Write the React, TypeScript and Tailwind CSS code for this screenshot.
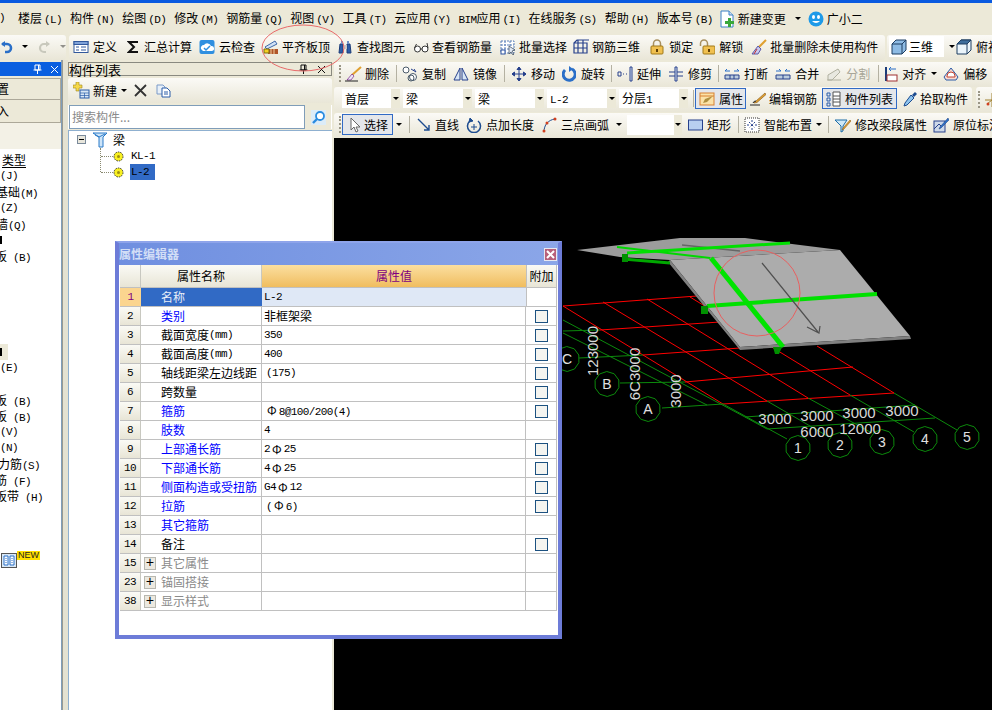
import type { ReactNode } from "react";

const mono = "font-['Liberation_Mono','Noto_Sans_CJK_SC',monospace] text-[11px] tracking-[-0.6px]";
const band = "bg-linear-to-b from-[#fbfaf6] to-[#e9e6d7]";

function Ico({ children, w = 16 }: { children: ReactNode; w?: number }) {
  return (
    <svg width={w} height={16} viewBox={`0 0 ${w} 16`} className="shrink-0">
      {children}
    </svg>
  );
}

function Arrow({ className = "" }: { className?: string }) {
  return <span className={`h-0 w-0 shrink-0 border-x-[3px] border-t-[3px] border-x-transparent border-t-black ${className}`} />;
}

function Sep({ className = "" }: { className?: string }) {
  return <span className={`h-[17px] w-px shrink-0 bg-[#b4b1a2] ${className}`} />;
}

function Grip({ className = "" }: { className?: string }) {
  return <span className={`h-[17px] w-[2px] shrink-0 border-l-2 border-dotted border-[#9a9686] ${className}`} />;
}

function Tool({ icon, label, className = "", gap = "gap-[4px]", muted }: { icon: ReactNode; label: string; className?: string; gap?: string; muted?: boolean }) {
  return (
    <span className={`flex shrink-0 items-center whitespace-nowrap ${gap} ${muted ? "text-[#a8a698]" : ""} ${className}`}>
      {icon}
      {label}
    </span>
  );
}

function Menu({ label, hot, className = "" }: { label: string; hot: string; className?: string }) {
  return (
    <span className={`shrink-0 whitespace-nowrap ${className}`}>
      {label}
      <span className={`${mono} ml-[2px]`}>({hot})</span>
    </span>
  );
}

function Drop({ label, className = "" }: { label: ReactNode; className?: string }) {
  return (
    <span className={`flex h-[19px] shrink-0 items-center bg-white pl-[3px] ${className}`}>
      <span className="flex-1 truncate">{label}</span>
      <span className="flex h-full w-[9px] items-center justify-center bg-[#ece9d8]">
        <Arrow />
      </span>
    </span>
  );
}

const icons = {
  define: (
    <Ico>
      <rect x="1" y="2.5" width="14" height="11" fill="#fff" stroke="#31589c" />
      <rect x="1" y="2.5" width="14" height="3" fill="#7fa2d8" stroke="#31589c" />
      <path d="M3 8h3M3 11h3M8 8h5M8 11h5" stroke="#31589c" />
    </Ico>
  ),
  sigma: (
    <Ico w={13}>
      <path d="M11 3H2l5 5-5 5h9" fill="none" stroke="#111" strokeWidth="2" />
    </Ico>
  ),
  cloud: (
    <Ico>
      <rect x="0.5" y="1" width="15" height="14" rx="2" fill="#2f8fe0" />
      <path d="M2 10a3 3 0 0 1 3-4 4 4 0 0 1 7 1 2.5 2.5 0 0 1 1 5H4z" fill="#fff" />
      <path d="M5 9l2 2 4-4" fill="none" stroke="#2f8fe0" strokeWidth="1.5" />
    </Ico>
  ),
  align: (
    <Ico>
      <path d="M2 8l10-6 2 3-10 5z" fill="#cfe0f5" stroke="#3e68a8" />
      <rect x="5" y="10" width="10" height="5" fill="#b0552a" />
      <path d="M8 10v5M11 10v5" stroke="#f0d0a0" />
      <path d="M1 10h5v4H1z" fill="#f5d020" stroke="#7a6a10" />
    </Ico>
  ),
  binoculars: (
    <Ico>
      <path d="M2 14l1-9h3v9zM10 14V5h3l1 9z" fill="#2d5ca8" stroke="#1d3c78" />
      <rect x="6" y="6" width="4" height="4" fill="#c8c8c8" />
      <rect x="4" y="2" width="2" height="3" fill="#6d8fc8" />
      <rect x="10" y="2" width="2" height="3" fill="#6d8fc8" />
    </Ico>
  ),
  glasses: (
    <Ico>
      <circle cx="4.5" cy="10" r="3" fill="#fff" stroke="#333" />
      <circle cx="12" cy="10" r="3" fill="#fff" stroke="#333" />
      <path d="M7.5 10h1.5M1.5 9l2-4M15 9l-1-5" stroke="#333" fill="none" />
    </Ico>
  ),
  batch: (
    <Ico>
      <path d="M1 2h13v12H1zM1 6h13M1 10h13M5 2v12M10 2v12" fill="#fff" stroke="#5a7fb8" strokeDasharray="2 1" />
      <rect x="1" y="11" width="4" height="4" fill="#fff" stroke="#2a50a0" />
      <path d="M9 7l6 4-3 1 2 3-1 1-2-3-2 2z" fill="#e0e8f5" stroke="#345" strokeWidth="0.7" />
    </Ico>
  ),
  rebar3d: (
    <Ico>
      <path d="M1 4l3-3h12M1 4h13v10H1zM5 1v13M10 1v13M1 9h13" fill="none" stroke="#27418c" strokeWidth="1.2" />
    </Ico>
  ),
  lock: (
    <Ico>
      <path d="M4.5 7V4.5a3.5 3.5 0 0 1 7 0V7" fill="none" stroke="#a89060" strokeWidth="1.5" />
      <rect x="2" y="7" width="12" height="8" rx="1" fill="#f0c050" stroke="#a07818" />
      <rect x="7" y="10" width="2" height="3" fill="#604008" />
    </Ico>
  ),
  unlock: (
    <Ico>
      <path d="M1.5 7V4.5a3.5 3.5 0 0 1 7 0V7" fill="none" stroke="#a89060" strokeWidth="1.5" />
      <rect x="4" y="7" width="12" height="8" rx="1" fill="#f0c050" stroke="#a07818" />
      <rect x="9" y="10" width="2" height="3" fill="#604008" />
    </Ico>
  ),
  broom: (
    <Ico>
      <path d="M15 1L7 9" stroke="#e0a030" strokeWidth="2" />
      <path d="M7 7l3 3-3 5H1z" fill="#c8c8f0" stroke="#5a5aa8" />
      <path d="M3 15l3-5" stroke="#c03030" />
    </Ico>
  ),
  cube: (
    <Ico>
      <path d="M1 5l4-4h10v10l-4 4H1z" fill="#8ebbe4" stroke="#1d3c60" />
      <path d="M1 5h10v10M11 5l4-4" fill="none" stroke="#1d3c60" />
    </Ico>
  ),
  topView: (
    <Ico>
      <path d="M1 5l4-4h10v10l-4 4H1z" fill="#eaf4fb" stroke="#1d3c60" />
      <path d="M1 5l4-4h10l-4 4z" fill="#3d6d9c" stroke="#1d3c60" />
      <path d="M11 5v10M11 5l4-4" fill="none" stroke="#1d3c60" />
    </Ico>
  ),
  erase: (
    <Ico w={17}>
      <path d="M16 1L7 9" stroke="#e0a030" strokeWidth="2" />
      <path d="M7 8l2 2-3 4H2z" fill="#e8e8f8" stroke="#607" strokeWidth="0.6" />
      <path d="M0 15h13" stroke="#222" />
    </Ico>
  ),
  copy: (
    <Ico>
      <circle cx="4" cy="4" r="3" fill="#fff" stroke="#4a5a6a" />
      <circle cx="11" cy="11" r="3.5" fill="#fff" stroke="#4a5a6a" />
      <circle cx="9" cy="12" r="3" fill="none" stroke="#4a5a6a" />
      <path d="M9 3l5 3-2-3" fill="none" stroke="#27418c" />
    </Ico>
  ),
  mirror: (
    <Ico>
      <path d="M7 2L1 14h6zM9 2l6 12H9z" fill="#d8e6f5" stroke="#27418c" />
    </Ico>
  ),
  move: (
    <Ico>
      <path d="M8 1v14M1 8h14M8 1L6 3.5h4zM8 15l-2-2.5h4zM1 8l2.5-2v4zM15 8l-2.5-2v4z" fill="#27418c" stroke="#27418c" />
    </Ico>
  ),
  rotate: (
    <Ico w={14}>
      <path d="M3 4a6 6 0 1 0 7-1" fill="none" stroke="#2a6fc8" strokeWidth="3" />
      <path d="M7 0l4 3-4 3z" fill="#2a6fc8" />
    </Ico>
  ),
  extend: (
    <Ico>
      <path d="M1 6h3v4H1zM6 8h1M9 8h1" fill="none" stroke="#27418c" />
      <path d="M13 1h2v14h-2z" fill="#dfe8f5" stroke="#27418c" />
    </Ico>
  ),
  trim: (
    <Ico w={15}>
      <path d="M0 6h14M0 10h14" stroke="#27418c" />
      <path d="M6 1h2v14H6z" fill="#dfe8f5" stroke="#27418c" />
    </Ico>
  ),
  split: (
    <Ico>
      <path d="M1 5h5M10 5h5M1 5l2-2M15 5l-2-2" stroke="#2a6fc8" fill="none" />
      <path d="M1 9h14v4H1zM6 9v4M10 9v4" fill="#bcd" stroke="#27418c" />
    </Ico>
  ),
  merge: (
    <Ico>
      <path d="M1 5h5M10 5h5M6 5L4 3M10 5l2-2" stroke="#2a6fc8" fill="none" />
      <path d="M1 9h14v4H1zM8 9v4" fill="#bcd" stroke="#27418c" />
    </Ico>
  ),
  cut: (
    <Ico>
      <path d="M2 14V9l10-6 2 3-8 8z" fill="#e8e8e0" stroke="#b0b0a0" />
      <path d="M1 14h14" stroke="#b0b0a0" />
    </Ico>
  ),
  alignLeft: (
    <Ico w={13}>
      <path d="M1 1v14" stroke="#1d3c78" strokeWidth="2" />
      <path d="M4 3h7M4 3l2-2M4 3l2 2" stroke="#2a6fc8" fill="none" />
      <rect x="2" y="9" width="10" height="6" fill="#fff" stroke="#a03030" />
    </Ico>
  ),
  offset: (
    <Ico>
      <path d="M1 11L8 2l7 9-2 3H3z" fill="#f8d8d0" stroke="#2a5ca8" />
      <path d="M4 10a4 4 0 0 1 8 0v1H4z" fill="#fff" stroke="#c04030" />
    </Ico>
  ),
  attr: (
    <Ico>
      <rect x="1" y="2" width="14" height="12" fill="#fbe2a8" stroke="#d88030" />
      <path d="M1 5h14" stroke="#d88030" />
      <path d="M4 12l2-4 8-3-6 6z" fill="#b09040" />
    </Ico>
  ),
  pencil: (
    <Ico>
      <path d="M15 2L6 10l-2 2 3-.5 9-8z" fill="#e0a030" stroke="#805010" strokeWidth="0.6" />
      <path d="M0 14h10M3 12a3 3 0 0 1 3-2" stroke="#222" fill="none" />
    </Ico>
  ),
  list: (
    <Ico w={15}>
      <path d="M1 2h3v3H1zM1 7h3v3H1zM1 12h3v3H1z" fill="none" stroke="#2a5ca8" />
      <path d="M7 1h7v14H7zM7 5h7M7 8h7M7 11h7" fill="#fff" stroke="#555" />
    </Ico>
  ),
  dropper: (
    <Ico>
      <path d="M13 1l2 2-3 3-2-2z" fill="#1d4c90" />
      <path d="M9 4l3 3-7 7-3 1 1-3z" fill="#8ec4ee" stroke="#1d4c90" />
    </Ico>
  ),
  cursor: (
    <Ico w={12}>
      <path d="M3 1v12l3-3 2 5 2-1-2-4h4z" fill="#fff" stroke="#666" />
    </Ico>
  ),
  line: (
    <Ico w={14}>
      <path d="M1 2l11 11M12 8v5H7" fill="none" stroke="#1d4c90" strokeWidth="1.4" />
    </Ico>
  ),
  pointLen: (
    <Ico>
      <path d="M4 4a6.5 6.5 0 1 0 8 0" fill="none" stroke="#1d4c90" strokeWidth="1.5" />
      <path d="M4 1l3 3-4 1zM5 10h6M8 7v6" fill="#1d4c90" stroke="#1d4c90" />
    </Ico>
  ),
  arc: (
    <Ico w={15}>
      <path d="M2 15C2 8 6 3 13 2" fill="none" stroke="#1d4c90" />
      <circle cx="2" cy="14" r="1.5" fill="#d04020" />
      <circle cx="5" cy="6" r="1.5" fill="#d04020" />
      <circle cx="13" cy="2" r="1.5" fill="#d04020" />
    </Ico>
  ),
  rect: (
    <Ico w={15}>
      <rect x="0.5" y="3" width="14" height="10" fill="#b8cff0" stroke="#27418c" />
    </Ico>
  ),
  smart: (
    <Ico>
      <rect x="1" y="1" width="14" height="14" fill="#fff" stroke="#333" strokeDasharray="1 1" />
      <path d="M8 3v10M3 8h10M5 5l6 6M11 5l-6 6" stroke="#27418c" strokeDasharray="2 2" />
    </Ico>
  ),
  filter: (
    <Ico w={17}>
      <path d="M1 3h12L9 9v5l-2 1V9z" fill="#cfe8f5" stroke="#1d6ca8" />
      <path d="M16 3L9 11l-1 2 2-1 7-8z" fill="#e0a030" stroke="#805010" strokeWidth="0.5" />
    </Ico>
  ),
  inPlace: (
    <Ico>
      <rect x="1" y="4" width="11" height="11" fill="#cdd8e8" stroke="#27418c" />
      <path d="M1 12l5-5 3 3" fill="none" stroke="#27418c" />
      <path d="M15 1L7 10l-1 2 2-1 8-8z" fill="#2a6fc8" stroke="#1d3c78" strokeWidth="0.5" />
    </Ico>
  ),
};

function Pin({ light }: { light?: boolean }) {
  const c = light ? "#fff" : "#111";
  return (
    <svg width="9" height="10" viewBox="0 0 9 10">
      <path d="M2 1h5v5H2zM0.5 6h8M4.5 6v4M5.5 1v5" fill="none" stroke={c} />
    </svg>
  );
}

function Cross({ light }: { light?: boolean }) {
  return (
    <svg width="9" height="9" viewBox="0 0 9 9">
      <path d="M1 1l7 7M8 1L1 8" stroke={light ? "#fff" : "#111"} />
    </svg>
  );
}

function MenuBar() {
  return (
    <div className="flex h-[32px] shrink-0 items-center pb-[1px]">
      <span className={`${mono} -ml-[1px]`}>)</span>
      <Menu label="楼层" hot="L" className="ml-[13px]" />
      <Menu label="构件" hot="N" className="ml-[8px]" />
      <Menu label="绘图" hot="D" className="ml-[8px]" />
      <Menu label="修改" hot="M" className="ml-[8px]" />
      <Menu label="钢筋量" hot="Q" className="ml-[8px]" />
      <Menu label="视图" hot="V" className="ml-[8px]" />
      <Menu label="工具" hot="T" className="ml-[8px]" />
      <Menu label="云应用" hot="Y" className="ml-[8px]" />
      <span className="ml-[8px] shrink-0 whitespace-nowrap">
        <span className={mono}>BIM</span>应用<span className={`${mono} ml-[2px]`}>(I)</span>
      </span>
      <Menu label="在线服务" hot="S" className="ml-[8px]" />
      <Menu label="帮助" hot="H" className="ml-[8px]" />
      <Menu label="版本号" hot="B" className="ml-[8px]" />
      <span className="ml-[6px] flex shrink-0 items-center gap-[3px] whitespace-nowrap">
        <svg width="16" height="18" viewBox="0 0 16 18">
          <path d="M2 1h8l4 4v12H2z" fill="#fff" stroke="#3a80c8" />
          <path d="M10 1v4h4" fill="#cde" stroke="#3a80c8" />
          <path d="M9 8v3h-3v3h3v3h3v-3h3v-3h-3V8z" fill="#3aa83a" />
        </svg>
        新建变更
      </span>
      <Arrow className="ml-[9px]" />
      <span className="ml-[7px] flex shrink-0 items-center gap-[3px] whitespace-nowrap">
        <svg width="16" height="16" viewBox="0 0 16 16">
          <circle cx="8" cy="8" r="7.5" fill="#1e9ae8" />
          <ellipse cx="5.5" cy="6" rx="1.5" ry="2" fill="#fff" />
          <ellipse cx="10.5" cy="6" rx="1.5" ry="2" fill="#fff" />
          <path d="M4 10q4 4 8 0" fill="#fff" />
        </svg>
        广小二
      </span>
    </div>
  );
}

function MainToolbar() {
  return (
    <div className="flex h-[25px] shrink-0 items-center">
      <div className={`flex h-full w-[66px] shrink-0 items-center rounded-r-[3px] pb-[2px] ${band}`}>
        <svg width="12" height="14" viewBox="0 0 12 14" className="ml-[1px]">
          <path d="M1 4h5a4 4 0 0 1 0 8H4" fill="none" stroke="#2a6fc8" strokeWidth="2.6" />
          <path d="M0 4l4-3v6z" fill="#2a6fc8" />
        </svg>
        <Arrow className="ml-[9px]" />
        <svg width="12" height="14" viewBox="0 0 12 14" className="ml-[10px]">
          <path d="M11 4H6a4 4 0 0 0 0 8h2" fill="none" stroke="#c8c8bc" strokeWidth="2.2" />
          <path d="M12 4L8 1v6z" fill="#c8c8bc" />
        </svg>
        <Arrow className="ml-[10px] opacity-40" />
      </div>
      <div className={`ml-[3px] flex h-full w-[816px] shrink-0 items-center rounded-[3px] pb-[2px] ${band}`}>
        <Tool icon={icons.define} label="定义" className="ml-[4px]" />
        <Tool icon={icons.sigma} label="汇总计算" className="ml-[10px]" />
        <Tool icon={icons.cloud} label="云检查" className="ml-[7px]" />
        <Tool icon={icons.align} label="平齐板顶" className="ml-[8px]" gap="gap-[3px]" />
        <Tool icon={icons.binoculars} label="查找图元" className="ml-[7px]" />
        <Tool icon={icons.glasses} label="查看钢筋量" className="ml-[8px]" gap="gap-[3px]" />
        <Tool icon={icons.batch} label="批量选择" className="ml-[8px]" gap="gap-[3px]" />
        <Tool icon={icons.rebar3d} label="钢筋三维" className="ml-[6px]" gap="gap-[3px]" />
        <Tool icon={icons.lock} label="锁定" className="ml-[9px]" />
        <Tool icon={icons.unlock} label="解锁" className="ml-[6px]" />
        <Tool icon={icons.broom} label="批量删除未使用构件" className="ml-[8px]" gap="gap-[3px]" />
      </div>
      <div className={`ml-[2px] flex h-full flex-1 items-center overflow-hidden rounded-l-[3px] pb-[2px] ${band}`}>
        <span className="ml-[2px] flex h-[21px] w-[55px] shrink-0 items-center gap-[2px] bg-white pl-[2px]">
          {icons.cube}
          三维
        </span>
        <Arrow className="ml-[5px]" />
        <Tool icon={icons.topView} label="俯视" className="ml-[1px]" />
      </div>
    </div>
  );
}

function LeftPanel() {
  return (
    <div className="flex w-[62px] shrink-0 flex-col border-r border-[#7f9db9]">
      <div className="mt-[2px] flex h-[14px] shrink-0 items-center bg-[#0a5fe0]">
        <span className="ml-[33px] flex"><Pin light /></span>
        <span className="ml-[8px] flex"><Cross light /></span>
      </div>
      <div className="mt-[2px] flex h-[22px] shrink-0 items-center overflow-hidden border-y border-r border-[#aca899] bg-[#ece9d8]"><span className="-ml-[3px]">置</span></div>
      <div className="flex h-[23px] shrink-0 items-center overflow-hidden border-b border-r border-[#aca899] bg-[#ece9d8]"><span className="-ml-[3px]">入</span></div>
      <div className="h-[26px] shrink-0 bg-[#f3f1e6]" />
      <div className="flex flex-1 flex-col overflow-hidden bg-white pt-[3px] leading-[16px]">
        <div className="ml-[2px] h-[16px] w-fit border-b border-black">类型</div>
        <div className={`h-[16px] ${mono} leading-[16px]`}>(J)</div>
        <div className="-ml-[4px] h-[16px] whitespace-nowrap">基础<span className={mono}>(M)</span></div>
        <div className={`h-[16px] ${mono} leading-[16px]`}>(Z)</div>
        <div className="-ml-[4px] h-[16px] whitespace-nowrap">墙<span className={mono}>(Q)</span></div>
        <div className="h-[16px] w-[2px] py-[4px]"><div className="h-full bg-black" /></div>
        <div className="-ml-[5px] h-[16px] whitespace-nowrap">板<span className={mono}> (B)</span></div>
        <div className="h-[80px]" />
        <div className="h-[16px] w-[8px] bg-[#ece9d8] py-[4px]"><div className="h-full w-[2px] bg-black" /></div>
        <div className={`h-[16px] ${mono} leading-[16px]`}>(E)</div>
        <div className="h-[16px]" />
        <div className="-ml-[5px] h-[16px] whitespace-nowrap">板<span className={mono}> (B)</span></div>
        <div className="-ml-[5px] h-[16px] whitespace-nowrap">板<span className={mono}> (B)</span></div>
        <div className={`h-[16px] ${mono} leading-[16px]`}>(V)</div>
        <div className={`h-[16px] ${mono} leading-[16px]`}>(N)</div>
        <div className="-ml-[2px] h-[16px] whitespace-nowrap">力筋<span className={mono}>(S)</span></div>
        <div className="-ml-[5px] h-[16px] whitespace-nowrap">筋<span className={mono}> (F)</span></div>
        <div className="-ml-[5px] h-[16px] whitespace-nowrap">板带<span className={mono}> (H)</span></div>
        <div className="ml-[1px] mt-[48px] flex items-start">
          <svg width="16" height="15" viewBox="0 0 16 15" className="mt-[1px]">
            <rect x="0.5" y="0.5" width="15" height="14" fill="#d8e8f8" stroke="#555" />
            <path d="M3 3h4v9H3zM9 3h4v9H9z" fill="#fff" stroke="#2a70c8" />
            <path d="M5 5v6M11 5v6" stroke="#2a70c8" strokeDasharray="1 1" />
          </svg>
          <span className="-mt-[1px] bg-[#ffe000] px-[1px] font-['Liberation_Sans',sans-serif] text-[9px] leading-[9px] text-[#222]">NEW</span>
        </div>
      </div>
    </div>
  );
}

function ListPanel() {
  return (
    <div className="flex w-[264px] shrink-0 flex-col">
      <div className="mt-[2px] flex h-[14px] shrink-0 items-center border border-[#8a8a80] bg-[#ece9d8] pr-[5px] text-[13px] leading-none">
        <span className="flex-1">构件列表</span>
        <span className="flex"><Pin /></span>
        <span className="ml-[9px] flex"><Cross /></span>
      </div>
      <div className={`mt-[2px] flex h-[25px] shrink-0 items-center rounded-[3px] ${band}`}>
        <svg width="17" height="17" viewBox="0 0 17 17" className="ml-[5px]">
          <path d="M3 0h3v3h3v3H6v3H3V6H0V3h3z" fill="#f5d84a" stroke="#a08820" strokeWidth="0.6" />
          <rect x="7" y="8" width="9" height="8" fill="#d8e6f5" stroke="#2a5ca8" />
          <path d="M7 11h9M7 13.5h9M11.5 11v5" stroke="#2a5ca8" strokeWidth="0.7" />
        </svg>
        <span className="ml-[3px]">新建</span>
        <Arrow className="ml-[4px]" />
        <svg width="13" height="13" viewBox="0 0 13 13" className="ml-[7px]">
          <path d="M1 1l11 11M12 1L1 12" stroke="#333" strokeWidth="1.8" />
        </svg>
        <svg width="15" height="14" viewBox="0 0 15 14" className="ml-[9px]">
          <path d="M1 1h6l2 2v7H1z" fill="#e8f0f8" stroke="#7a9ac8" />
          <path d="M6 4h5l3 3v6H6z" fill="#fff" stroke="#2a5ca8" />
          <path d="M8 8h4M8 10h4" stroke="#2a5ca8" />
        </svg>
      </div>
      <div className="mt-[2px] flex h-[24px] shrink-0 bg-white">
        <span className="ml-[1px] flex h-full w-[236px] items-center border border-[#7f9db9] pl-[2px] text-[12px] text-[#8a8a8a]">搜索构件...</span>
        <span className="flex w-[26px] items-center justify-center bg-[#ece9d8]">
          <svg width="15" height="15" viewBox="0 0 15 15">
            <rect width="15" height="15" fill="#dcecf8" />
            <circle cx="9" cy="6" r="4" fill="#fff" stroke="#2a8ce0" strokeWidth="1.8" />
            <path d="M6 9l-4 4" stroke="#2a8ce0" strokeWidth="2.4" />
          </svg>
        </span>
      </div>
      <div className="relative mt-[1px] flex-1 border-l border-t border-[#8fb0d0] bg-white">
        <div className="flex h-[17px] items-center">
          <span className="ml-[8px] flex h-[9px] w-[9px] items-center justify-center border border-[#7a8a9a] bg-[#e8e6dc]">
            <span className="h-px w-[5px] bg-black" />
          </span>
          <svg width="14" height="16" viewBox="0 0 14 16" className="ml-[7px]">
            <path d="M0 1h14l-4 4v10H6V5z" fill="#cde4f8" stroke="#2a7ac8" />
            <path d="M2 3l4 2 6-3" fill="none" stroke="#2a7ac8" />
          </svg>
          <span className="ml-[6px]">梁</span>
        </div>
        <div className="ml-[31px] h-[24px] w-[13px] border-l border-dotted border-[#8a8a70]">
          {["KL-1", "L-2"].map((name, i) => (
            <div key={name} className="flex h-[16px] items-center">
              <span className="w-[12px] shrink-0 border-t border-dotted border-[#8a8a70]" />
              <svg width="11" height="11" viewBox="0 0 11 11" className="shrink-0">
                <circle cx="5.5" cy="5.5" r="4.5" fill="#f8f020" stroke="#333" strokeDasharray="1.5 1" />
                <circle cx="5.5" cy="5.5" r="1.5" fill="#a09010" />
              </svg>
              <span className={`${mono} ml-[6px] flex h-[16px] shrink-0 items-center whitespace-nowrap px-[1px] ${i === 1 ? "w-[25px] bg-[#316ac5]" : ""}`}>{name}</span>
            </div>
          ))}
        </div>
      </div>
    </div>
  );
}

function Scene() {
  const poly = (cx: number, cy: number, r: number) =>
    Array.from({ length: 10 }, (_, i) => {
      const a = (i / 10) * Math.PI * 2 + 0.3;
      return `${(cx + r * Math.cos(a)).toFixed(1)},${(cy + r * Math.sin(a)).toFixed(1)}`;
    }).join(" ");
  const bubbles: [number, number, string][] = [
    [798, 448, "1"], [840, 445, "2"], [882, 442, "3"], [925, 439, "4"], [967, 437, "5"],
    [648, 409, "A"], [607, 384, "B"], [567, 359, "C"],
  ];
  const dims: [number, number, string][] = [
    [775, 424, "3000"], [817, 421, "3000"], [859, 418, "3000"], [902, 416, "3000"],
    [817, 437, "6000"], [860, 434, "12000"],
  ];
  const vertical: [number, number, string][] = [
    [598, 351, "123000"], [640, 374, "6C3000"], [681, 391, "3000"],
  ];
  return (
    <svg viewBox="334 138 658 572" className="block h-full w-full bg-black">
      <g stroke="#ff0000" strokeWidth="1" fill="none">
        <path d="M563 306L697 296M600 330L720 322M643 355L740 348M685 382L853 367M723 404L894 393" />
        <path d="M563 306L723 404M603 302L767 401M647 299L808 398M690 297L850 395M817 346L894 393" />
      </g>
      <g stroke="#0c8a0c" strokeWidth="1" fill="none">
        <path d="M723 404L787 439M767 401L829 437M808 398L872 433M850 395L914 432M894 393L957 430" />
        <path d="M662 408L723 404M620 383L685 382M579 358L643 355M563 331L600 330" />
        <path d="M563 320L745 417L915 405M563 333L707 405M767 429L935 418M745 417L767 429" />
      </g>
      <path d="M577 250L680 238L745 238L840 250L670 260L620 257Z" fill="#9c9c9c" />
      <path d="M670 260L840 250L910 336L740 347Z" fill="#acacac" />
      <path d="M670 260L740 347L910 336L911 339L740 350L668 262Z" fill="#808080" />
      <path d="M682 245L740 251" stroke="#666" strokeWidth="1.5" />
      <path d="M617 247L710 258" stroke="#00d800" strokeWidth="2" />
      <path d="M627 253L790 243" stroke="#00e000" strokeWidth="3" />
      <path d="M623 259L670 263" stroke="#00a800" strokeWidth="3" />
      <path d="M711 258L783 347" stroke="#00e400" strokeWidth="5" />
      <path d="M707 306L877 294" stroke="#00e000" strokeWidth="4" />
      <path d="M622 254h6v8h-6zM701 306h7v8h-7zM773 347h9l-3 7h-4z" fill="#009000" />
      <circle cx="757" cy="293" r="43" fill="none" stroke="#e86060" />
      <path d="M762 263L818 332M807 327L819 333L820 326" fill="none" stroke="#505050" strokeWidth="1.2" />
      {bubbles.map(([x, y, t]) => (
        <g key={t}>
          <polygon points={poly(x, y, 12.5)} fill="#000" stroke="#0c8a0c" />
          <text x={x} y={y + 5} textAnchor="middle" fontSize="14" fill="#e0e0e0" fontFamily="'Liberation Sans',sans-serif">{t}</text>
        </g>
      ))}
      {dims.map(([x, y, t]) => (
        <text key={`${x}${y}`} x={x} y={y} textAnchor="middle" fontSize="15" fill="#d8d8d8" fontFamily="'Liberation Sans',sans-serif">{t}</text>
      ))}
      {vertical.map(([x, y, t]) => (
        <text key={t} x={x} y={y} transform={`rotate(-90 ${x} ${y})`} textAnchor="middle" fontSize="15" fill="#d8d8d8" fontFamily="'Liberation Sans',sans-serif">{t}</text>
      ))}
    </svg>
  );
}

function RightPanel() {
  return (
    <div className="flex min-w-0 flex-1 flex-col">
      <div className={`mt-[2px] flex h-[25px] shrink-0 items-center overflow-hidden whitespace-nowrap rounded-l-[3px] pb-[2px] ${band}`}>
        <Grip className="ml-[5px]" />
        <Tool icon={icons.erase} label="删除" className="ml-[4px]" gap="gap-[3px]" />
        <Sep className="ml-[7px]" />
        <Tool icon={icons.copy} label="复制" className="ml-[5px]" />
        <Tool icon={icons.mirror} label="镜像" className="ml-[7px]" />
        <Sep className="ml-[7px]" />
        <Tool icon={icons.move} label="移动" className="ml-[6px]" />
        <Tool icon={icons.rotate} label="旋转" className="ml-[7px]" gap="gap-[5px]" />
        <Sep className="ml-[6px]" />
        <Tool icon={icons.extend} label="延伸" className="ml-[5px]" />
        <Tool icon={icons.trim} label="修剪" className="ml-[8px]" />
        <Sep className="ml-[6px]" />
        <Tool icon={icons.split} label="打断" className="ml-[5px]" />
        <Tool icon={icons.merge} label="合并" className="ml-[7px]" />
        <Tool icon={icons.cut} label="分割" className="ml-[7px]" muted />
        <Sep className="ml-[8px]" />
        <Tool icon={icons.alignLeft} label="对齐" className="ml-[6px]" />
        <Arrow className="ml-[5px]" />
        <Tool icon={icons.offset} label="偏移" className="ml-[6px]" />
      </div>
      <div className="flex h-[25px] shrink-0 items-center whitespace-nowrap">
        <div className={`flex h-full w-[638px] shrink-0 items-center rounded-[3px] pb-[2px] ${band}`}>
          <Drop label="首层" className="ml-[8px] w-[58px]" />
          <Drop label="梁" className="ml-[3px] w-[69px]" />
          <Drop label="梁" className="ml-[3px] w-[69px]" />
          <Drop label={<span className={mono}>L-2</span>} className="ml-[3px] w-[69px]" />
          <Drop label={<>分层<span className={mono}>1</span></>} className="ml-[3px] w-[69px]" />
          <Sep className="ml-[5px]" />
          <span className="ml-[1px] flex h-[21px] w-[51px] shrink-0 items-center gap-[4px] border border-[#316ac5] bg-[#e4e6ea] pl-[3px]">
            {icons.attr}
            属性
          </span>
          <Tool icon={icons.pencil} label="编辑钢筋" className="ml-[4px]" gap="gap-[3px]" />
          <span className="ml-[5px] flex h-[21px] w-[75px] shrink-0 items-center gap-[4px] border border-[#316ac5] bg-[#e4e6ea] pl-[3px]">
            {icons.list}
            构件列表
          </span>
          <Tool icon={icons.dropper} label="拾取构件" className="ml-[5px]" gap="gap-[2px]" />
        </div>
        <div className={`ml-[4px] flex h-full flex-1 items-center overflow-hidden rounded-l-[3px] ${band}`}>
          <Grip className="ml-[2px]" />
          <svg width="14" height="16" viewBox="0 0 14 16" className="ml-[5px] shrink-0">
            <path d="M7 1v14M0 8h14M2 12l10-8" stroke="#a08030" />
            <circle cx="3" cy="12" r="1.5" fill="#d04020" />
          </svg>
        </div>
      </div>
      <div className={`mt-px flex h-[25px] shrink-0 items-center overflow-hidden whitespace-nowrap rounded-l-[3px] pb-[2px] ${band}`}>
        <Grip className="ml-[5px]" />
        <span className="ml-px flex h-[21px] w-[51px] shrink-0 items-center border border-[#316ac5] bg-[#e4e6ea] pl-[5px]">
          {icons.cursor}
          <span className="ml-[4px]">选择</span>
        </span>
        <Arrow className="ml-[3px]" />
        <Sep className="ml-[7px]" />
        <Tool icon={icons.line} label="直线" className="ml-[7px]" />
        <Tool icon={icons.pointLen} label="点加长度" className="ml-[7px]" />
        <Tool icon={icons.arc} label="三点画弧" className="ml-[8px]" />
        <Arrow className="ml-[7px]" />
        <span className="ml-[5px] flex h-[20px] w-[55px] shrink-0 items-center bg-white">
          <span className="flex-1" />
          <span className="flex h-full w-[8px] items-center justify-center bg-[#ece9d8]"><Arrow /></span>
        </span>
        <Tool icon={icons.rect} label="矩形" className="ml-[6px]" />
        <Sep className="ml-[7px]" />
        <Tool icon={icons.smart} label="智能布置" className="ml-[5px]" />
        <Arrow className="ml-[4px]" />
        <Sep className="ml-[6px]" />
        <Tool icon={icons.filter} label="修改梁段属性" className="ml-[5px]" />
        <Tool icon={icons.inPlace} label="原位标注" className="ml-[6px]" />
      </div>
      <div className="min-h-0 flex-1">
        <Scene />
      </div>
    </div>
  );
}

type Row = { no: number; name: ReactNode; value?: ReactNode; blue?: boolean; check?: boolean; group?: boolean };

const Bar = () => <span className="mx-[2px] font-['Noto_Sans_CJK_SC',sans-serif] text-[12px] tracking-normal">Φ</span>;

const rows: Row[] = [
  { no: 2, name: "类别", value: <span className="font-['Noto_Sans_CJK_SC',sans-serif] text-[12px] tracking-normal">非框架梁</span>, blue: true, check: true },
  { no: 3, name: <>截面宽度<span className={mono}>(mm)</span></>, value: "350", check: true },
  { no: 4, name: <>截面高度<span className={mono}>(mm)</span></>, value: "400", check: true },
  { no: 5, name: "轴线距梁左边线距", value: <span className="ml-[2px]">(175)</span>, check: true },
  { no: 6, name: "跨数量", check: true },
  { no: 7, name: "箍筋", value: <span className="ml-[1px]"><Bar />8@100/200(4)</span>, blue: true, check: true },
  { no: 8, name: "肢数", value: "4", blue: true },
  { no: 9, name: "上部通长筋", value: <>2<Bar />25</>, blue: true, check: true },
  { no: 10, name: "下部通长筋", value: <>4<Bar />25</>, blue: true, check: true },
  { no: 11, name: "侧面构造或受扭筋", value: <>G4<Bar />12</>, blue: true, check: true },
  { no: 12, name: "拉筋", value: <span className="ml-[2px]">(<Bar />6)</span>, blue: true, check: true },
  { no: 13, name: "其它箍筋", blue: true },
  { no: 14, name: "备注", check: true },
  { no: 15, name: "其它属性", group: true },
  { no: 23, name: "锚固搭接", group: true },
  { no: 38, name: "显示样式", group: true },
];

function PropertyDialog() {
  return (
    <div className="absolute left-[115px] top-[241px] flex h-[398px] w-[447px] flex-col border-x-[4px] border-b-[4px] border-t-[2px] border-x-[#6d7cd8] border-b-[#6d7cd8] border-t-[#8ea4ea] bg-[#7f9be2]">
      <div className="flex h-[22px] shrink-0 items-center justify-between bg-linear-to-r from-[#6f8fe0] to-[#8ba6e8] pr-[1px] text-[12px] font-bold text-[#d2def6]">
        <span>属性编辑器</span>
        <span className="flex h-[13px] w-[13px] items-center justify-center border border-[#e8e8f0] bg-[#b8607a]">
          <svg width="9" height="9" viewBox="0 0 9 9"><path d="M1 1l7 7M8 1L1 8" stroke="#fff" strokeWidth="2" /></svg>
        </span>
      </div>
      <div className="flex-1 bg-white pl-[1px] pr-[1px]">
        <div className="flex h-[23px] border-b border-[#c0c0c0] leading-none">
          <span className="w-[21px] shrink-0 border-r border-[#c8c8c0] bg-linear-to-b from-[#fafaf5] to-[#e8e5d6]" />
          <span className="flex w-[121px] shrink-0 items-center justify-center border-r border-[#c8c8c0] bg-linear-to-b from-[#fafaf5] to-[#e8e5d6]">属性名称</span>
          <span className="flex w-[264px] shrink-0 items-center justify-center bg-linear-to-b from-[#fbdf9f] to-[#f0bd5e] text-[#800080]">属性值</span>
          <span className="flex flex-1 items-center justify-center border-l border-r border-[#c0c0c0] bg-linear-to-b from-[#fafaf5] to-[#e8e5d6]">附加</span>
        </div>
        <div className="flex h-[19px] border-b border-[#c0c0c0]">
          <span className={`flex w-[21px] shrink-0 items-center justify-center bg-[#fbd58f] text-[#800080] ${mono}`}>1</span>
          <span className="flex w-[121px] shrink-0 items-center bg-[#316ac5] pl-[20px] text-[#e8eef8]">名称</span>
          <span className={`flex w-[264px] shrink-0 items-center bg-[#dfe8f6] pl-[2px] ${mono}`}>L-2</span>
          <span className="flex-1 border-x border-[#c0c0c0]" />
        </div>
        {rows.map((r) => (
          <div key={r.no} className="flex h-[19px] border-b border-[#c0c0c0] leading-none">
            <span className={`flex w-[21px] shrink-0 items-center justify-center border-r border-[#c8c8c0] bg-linear-to-b from-[#fafaf5] to-[#e8e5d6] ${mono}`}>{r.no}</span>
            <span className={`flex w-[121px] shrink-0 items-center whitespace-nowrap border-r border-[#c0c0c0] ${r.group ? "pl-[3px] text-[#8a8a8a]" : "pl-[20px]"} ${r.blue ? "text-[#0000ff]" : ""}`}>
              {r.group && (
                <span className="mr-[5px] flex h-[13px] w-[12px] items-center justify-center border border-[#b8b8b0] bg-[#ece9e0] font-['Liberation_Mono',monospace] text-[14px] leading-none text-black">+</span>
              )}
              {r.name}
            </span>
            <span className={`flex w-[264px] shrink-0 items-center whitespace-nowrap border-r border-[#c0c0c0] pl-[2px] ${mono}`}>{r.value}</span>
            <span className="flex flex-1 items-center justify-center border-r border-[#c0c0c0]">
              {r.check && <span className="h-[13px] w-[13px] border border-[#1c5180] bg-[#f4f4f0]" />}
            </span>
          </div>
        ))}
      </div>
    </div>
  );
}

export default function App() {
  return (
    <div className="relative flex h-[710px] w-[992px] flex-col overflow-hidden bg-[#ece9d8] font-['Noto_Sans_CJK_SC',sans-serif] text-[12px] leading-none text-black">
      <div className="h-[3px] shrink-0 bg-[#0a5ae0]" />
      <MenuBar />
      <MainToolbar />
      <div className="flex min-h-0 flex-1">
        <LeftPanel />
        <div className="w-[6px] shrink-0 border-l border-[#9a9a90] bg-[#e4e2d2]" />
        <ListPanel />
        <div className="w-[2px] shrink-0 bg-[#ece9d8]" />
        <RightPanel />
      </div>
      <svg width="90" height="50" viewBox="0 0 90 50" className="absolute left-[258px] top-[23px]">
        <ellipse cx="45" cy="25" rx="41" ry="23" fill="none" stroke="#e86a6a" />
      </svg>
      <PropertyDialog />
    </div>
  );
}
